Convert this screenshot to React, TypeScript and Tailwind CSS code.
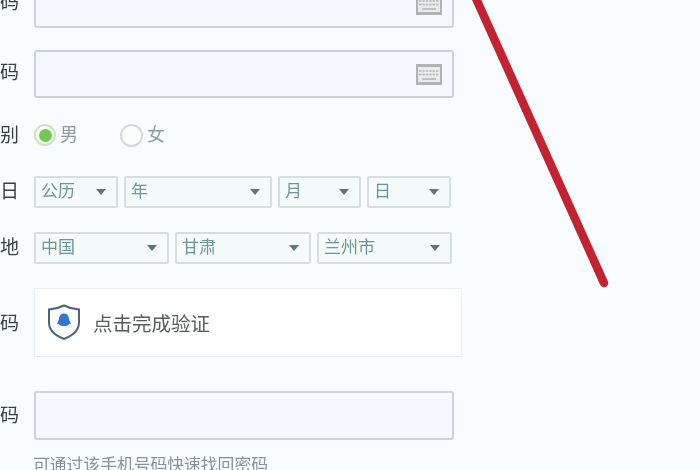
const font = 'font-["Liberation_Sans","Noto_Sans_CJK_SC",sans-serif]';

const Keyboard = () => (
  <svg width="26" height="21" viewBox="0 0 26 21" className="shrink-0">
    <rect x="0" y="0" width="26" height="21" fill="#b0b3b5" />
    <rect x="2" y="3" width="22" height="15" fill="#e9ebec" />
    <path d="M3 7h20M3 10.500h20" stroke="#b4b7b9" strokeWidth="1.4" strokeDasharray="2.400 1" />
    <path d="M6 15h14" stroke="#b4b7b9" strokeWidth="1.6" />
  </svg>
);

const Shield = () => (
  <svg width="34" height="37" viewBox="0 0 34 37" className="shrink-0">
    <path
      d="M2 5.500C8 5 13 3.500 17 1.500c4 2 9 3.500 15 4v13c0 8-6 13-15 16.500C8 31.500 2 26.500 2 18.500z"
      fill="#fbfdff"
      stroke="#4a6480"
      strokeWidth="2"
    />
    <path
      d="M17 9.500c3.300 0 5 2.500 5 5.500 0 1 .8 2 1.500 3.500.6 1.400-.4 2-1.400 1.200-.2 1.500-2 2.300-5.100 2.300s-4.900-.8-5.100-2.300c-1 .8-2 .2-1.400-1.200.7-1.500 1.500-2.500 1.500-3.500 0-3 1.700-5.500 5-5.500z"
      fill="#2f78cf"
    />
  </svg>
);

const Label = ({ text, nudge = '' }: { text: string; nudge?: string }) => (
  <div className={`w-[34px] pr-[15px] flex justify-end shrink-0 whitespace-nowrap text-[19px] leading-none text-[#3a3f42] ${nudge}`}>
    {text}
  </div>
);

const Select = ({ text, width }: { text: string; width: string }) => (
  <div className={`${width} h-[32px] flex items-center justify-between pl-[5px] pr-[10px] bg-[#f5fafb] border-2 border-[#d6dfe0] rounded-[2px] text-[17px] text-[#6a9795]`}>
    <span>{text}</span>
    <span className="w-0 h-0 border-x-[5px] border-x-transparent border-t-[6px] border-t-[#5d7679]" />
  </div>
);

const InputBox = ({ height, icon }: { height: string; icon?: boolean }) => (
  <div className={`w-[420px] ${height} flex items-center justify-end pr-[10px] bg-[#f5f9fd] border-2 border-[#cdd2d5] rounded-[3px]`}>
    {icon && <Keyboard />}
  </div>
);

export default function App() {
  return (
    <div className={`relative w-[700px] h-[470px] overflow-hidden bg-[#f9fcfe] blur-[0.4px] ${font}`}>
      <div className="flex flex-col -mt-[20px]">
        <div className="flex items-center">
          <Label text="密码" nudge="-mt-[3px]" />
          <InputBox height="h-[48px]" icon />
        </div>

        <div className="flex items-center mt-[22px]">
          <Label text="确认密码" nudge="-mt-[3px]" />
          <InputBox height="h-[48px]" icon />
        </div>

        <div className="flex items-center mt-[21px] h-[32px]">
          <Label text="性别" />
          <div className="flex items-center text-[18px] text-[#8f9b9b]">
            <span className="w-[22px] h-[22px] rounded-full border-2 border-[#c6e8bb] bg-white flex items-center justify-center">
              <span className="w-[13px] h-[13px] rounded-full bg-[#72c84e]" />
            </span>
            <span className="ml-[4px]">男</span>
            <span className="ml-[42px] w-[23px] h-[23px] rounded-full border-2 border-[#d4d8d8] bg-[#fbfdfd]" />
            <span className="ml-[4px]">女</span>
          </div>
        </div>

        <div className="flex items-center mt-[25px]">
          <Label text="生日" nudge="-mt-[1px]" />
          <div className="flex gap-[6px]">
            <Select text="公历" width="w-[84px]" />
            <Select text="年" width="w-[148px]" />
            <Select text="月" width="w-[83px]" />
            <Select text="日" width="w-[84px]" />
          </div>
        </div>

        <div className="flex items-center mt-[24px]">
          <Label text="所在地" nudge="-mt-[1px]" />
          <div className="flex gap-[6px]">
            <Select text="中国" width="w-[135px]" />
            <Select text="甘肃" width="w-[136px]" />
            <Select text="兰州市" width="w-[135px]" />
          </div>
        </div>

        <div className="flex items-center mt-[24px]">
          <Label text="验证码" nudge="mt-[2px]" />
          <div className="w-[428px] h-[69px] flex items-center pl-[12px] gap-[12px] bg-white border border-[#e8eef1] text-[19.500px] text-[#555b5e]">
            <Shield />
            <span className="pt-[4px]">点击完成验证</span>
          </div>
        </div>

        <div className="flex items-center mt-[34px]">
          <Label text="手机号码" />
          <InputBox height="h-[49px]" />
        </div>

        <div className="ml-[33px] mt-[16px] text-[16.800px] leading-[20px] whitespace-nowrap text-[#8a9296]">
          可通过该手机号码快速找回密码
        </div>
      </div>

      <svg width="700" height="470" viewBox="0 0 700 470" className="absolute inset-0 pointer-events-none">
        <path d="M474 -6L604 283" stroke="#c3232f" strokeWidth="8.500" strokeLinecap="round" fill="none" />
      </svg>
    </div>
  );
}
